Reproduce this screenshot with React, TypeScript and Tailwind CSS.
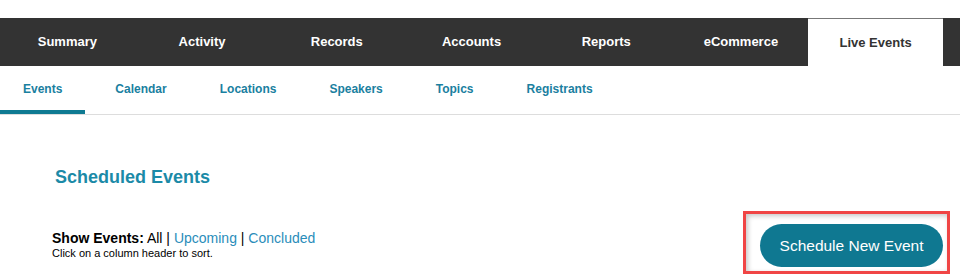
const mainTabs = ["Summary", "Activity", "Records", "Accounts", "Reports", "eCommerce", "Live Events"];
const subTabs = ["Events", "Calendar", "Locations", "Speakers", "Topics", "Registrants"];

export default function App() {
  return (
    <div className="min-h-[277px] w-[960px] overflow-hidden bg-white pt-[18px] font-['Liberation_Sans',Arial,sans-serif]">
      {/* main tabs */}
      <nav className="flex h-[48px] bg-[#333333]">
        <ul className="grid w-[943px] grid-cols-7">
          {mainTabs.map((tab) => {
            const active = tab === "Live Events";
            return (
              <li
                key={tab}
                className={
                  active
                    ? "flex items-center justify-center border-t border-[#777] bg-white text-[13px] font-bold text-[#333]"
                    : "flex items-center justify-center text-[13px] font-bold text-white"
                }
              >
                {tab}
              </li>
            );
          })}
        </ul>
      </nav>

      {/* sub tabs */}
      <ul className="flex h-[49px] gap-[7px] border-b border-[#dddddd]">
        {subTabs.map((tab) => {
          const active = tab === "Events";
          return (
            <li
              key={tab}
              className={
                active
                  ? "flex items-center border-b-[4px] border-[#0f7a92] px-[23px] pt-[2px] text-[12px] font-bold text-[#1a80a0]"
                  : "flex items-center px-[23px] pb-[2px] text-[12px] font-bold text-[#1a80a0]"
              }
            >
              {tab}
            </li>
          );
        })}
      </ul>

      <h2 className="mt-[52px] pl-[55px] text-[18px] leading-[21px] font-bold text-[#1b8aa7]">Scheduled Events</h2>

      <div className="mt-[23px] flex items-start justify-between">
        <div className="mt-[19px] pl-[52px] text-black">
          <p className="text-[14px] leading-[16px]">
            <span className="font-bold">Show Events:</span> All |{" "}
            <a className="cursor-pointer text-[#2a8dba]">Upcoming</a> |{" "}
            <a className="cursor-pointer text-[#2a8dba]">Concluded</a>
          </p>
          <p className="mt-[1px] text-[11px] leading-[13px]">Click on a column header to sort.</p>
        </div>

        <div className="mr-[10px] h-[63px] w-[207px] border-[3px] border-[#f04545] pt-[10px] pl-[14px] shadow-[inset_2px_2px_5px_rgba(0,0,0,0.22)]">
          <button className="flex h-[43px] w-[183px] items-center justify-center rounded-full bg-[#0f7891] text-[15.5px] text-white">
            Schedule New Event
          </button>
        </div>
      </div>
    </div>
  );
}
